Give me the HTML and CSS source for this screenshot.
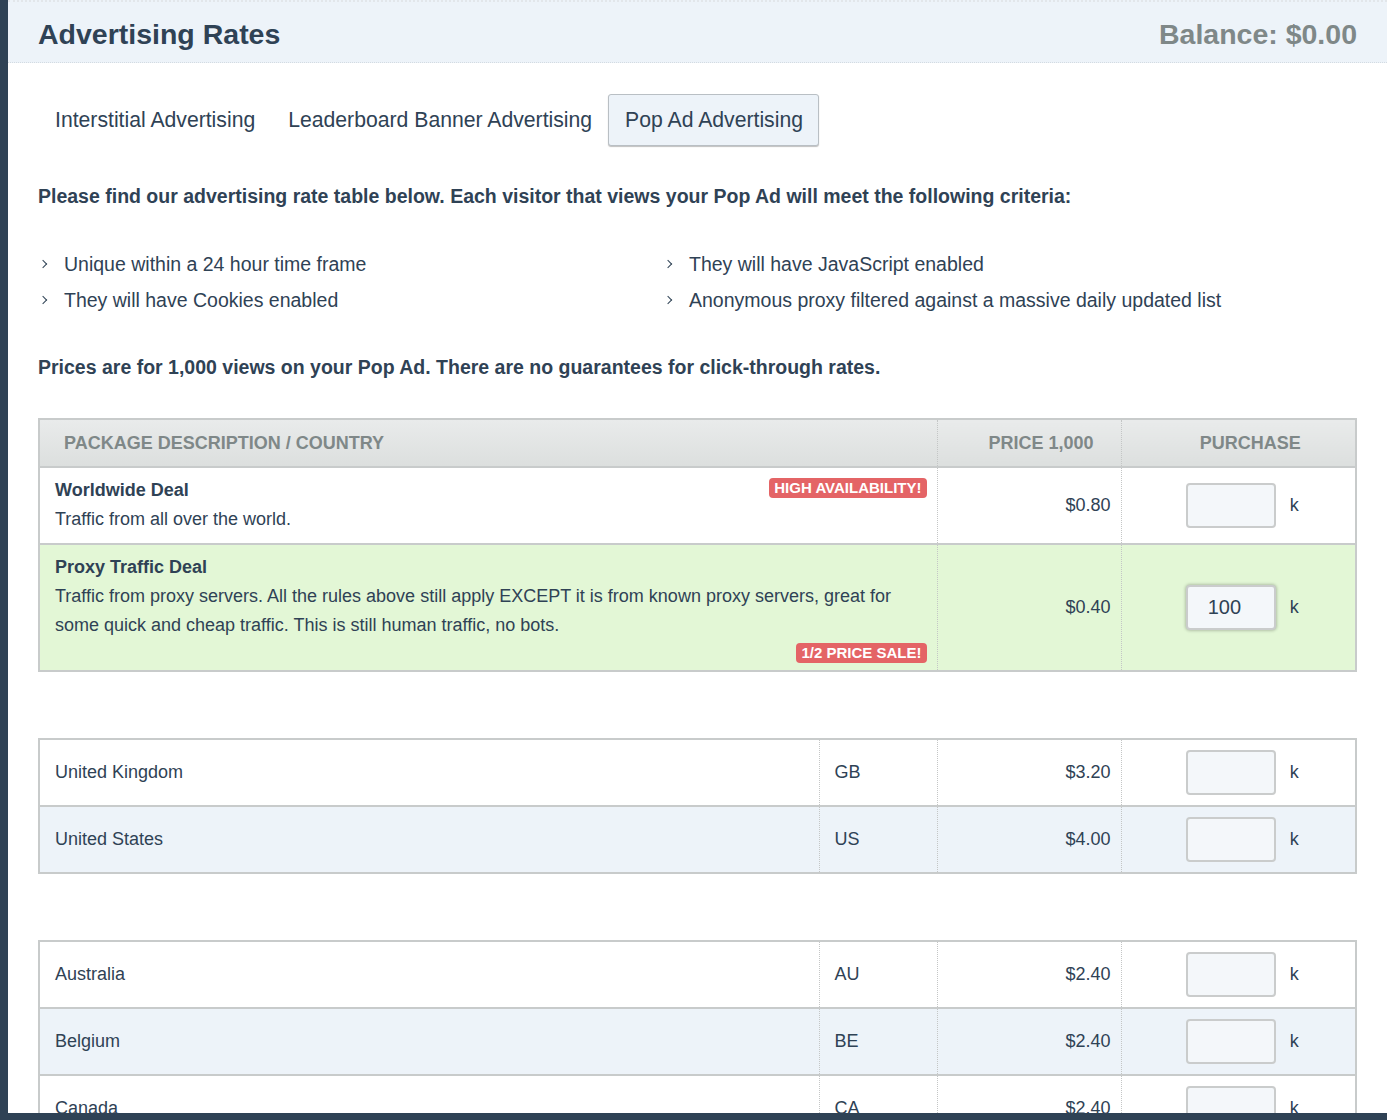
FILE: index.html
```html
<!DOCTYPE html>
<html lang="en">
<head>
<meta charset="utf-8">
<title>Advertising Rates</title>
<link rel="stylesheet" href="styles.css">
</head>
<body>
<div class="frame">
  <header class="page-header">
    <h1 class="title">Advertising Rates</h1>
    <div class="balance">Balance: $0.00</div>
  </header>
  <main class="content">
    <nav class="tabs">
      <a class="tab">Interstitial Advertising</a>
      <a class="tab">Leaderboard Banner Advertising</a>
      <a class="tab active">Pop Ad Advertising</a>
    </nav>

    <p class="lead">Please find our advertising rate table below. Each visitor that views your Pop Ad will meet the following criteria:</p>

    <ul class="criteria">
      <li>Unique within a 24 hour time frame</li>
      <li>They will have JavaScript enabled</li>
      <li>They will have Cookies enabled</li>
      <li>Anonymous proxy filtered against a massive daily updated list</li>
    </ul>

    <p class="lead lead-2">Prices are for 1,000 views on your Pop Ad. There are no guarantees for click-through rates.</p>

    <table class="rates rates-main">
      <colgroup><col class="c-desc-wide"><col class="c-price"><col class="c-buy"></colgroup>
      <thead>
        <tr><th class="th-left">Package Description / Country</th><th class="th-price">Price 1,000</th><th class="th-buy">Purchase</th></tr>
      </thead>
      <tbody>
        <tr class="deal">
          <td class="desc"><span class="badge badge-top">HIGH AVAILABILITY!</span><strong class="deal-name">Worldwide Deal</strong><div class="deal-text">Traffic from all over the world.</div></td>
          <td class="price">$0.80</td>
          <td class="buy"><span class="qty"><input class="qty-input" type="text"></span><span class="unit">k</span></td>
        </tr>
        <tr class="deal deal-green">
          <td class="desc"><strong class="deal-name">Proxy Traffic Deal</strong><div class="deal-text">Traffic from proxy servers. All the rules above still apply EXCEPT it is from known proxy servers, great for some quick and cheap traffic. This is still human traffic, no bots.</div><div class="badge-row"><span class="badge">1/2 PRICE SALE!</span></div></td>
          <td class="price">$0.40</td>
          <td class="buy"><span class="qty"><input class="qty-input focused" type="text" value="100"></span><span class="unit">k</span></td>
        </tr>
      </tbody>
    </table>

    <table class="rates rates-country">
      <colgroup><col class="c-country"><col class="c-code"><col class="c-price"><col class="c-buy"></colgroup>
      <tbody>
        <tr><td class="country">United Kingdom</td><td class="code">GB</td><td class="price">$3.20</td><td class="buy"><span class="qty"><input class="qty-input" type="text"></span><span class="unit">k</span></td></tr>
        <tr class="alt"><td class="country">United States</td><td class="code">US</td><td class="price">$4.00</td><td class="buy"><span class="qty"><input class="qty-input" type="text"></span><span class="unit">k</span></td></tr>
      </tbody>
    </table>

    <table class="rates rates-country">
      <colgroup><col class="c-country"><col class="c-code"><col class="c-price"><col class="c-buy"></colgroup>
      <tbody>
        <tr><td class="country">Australia</td><td class="code">AU</td><td class="price">$2.40</td><td class="buy"><span class="qty"><input class="qty-input" type="text"></span><span class="unit">k</span></td></tr>
        <tr class="alt"><td class="country">Belgium</td><td class="code">BE</td><td class="price">$2.40</td><td class="buy"><span class="qty"><input class="qty-input" type="text"></span><span class="unit">k</span></td></tr>
        <tr><td class="country">Canada</td><td class="code">CA</td><td class="price">$2.40</td><td class="buy"><span class="qty"><input class="qty-input" type="text"></span><span class="unit">k</span></td></tr>
      </tbody>
    </table>
  </main>
</div>
<div class="bottom-bar"></div>
</body>
</html>
```

FILE: styles.css
```css
html, body {
  margin: 0;
  padding: 0;
}
body {
  background: #ffffff;
  font-family: "Liberation Sans", Arial, Helvetica, sans-serif;
  color: #2c3e50;
  overflow: hidden;
}
.frame {
  border-left: 8px solid #2f4255;
  min-height: 1120px;
  box-sizing: border-box;
}
.page-header {
  background: #edf3f9;
  height: 63px;
  box-sizing: border-box;
  border-top: 2px dotted #e2e6ea;
  border-bottom: 1px dotted #d3dbe2;
  padding: 0 30px 0 30px;
  display: flex;
  align-items: center;
  justify-content: space-between;
}
.title {
  margin: 0;
  font-size: 28.5px;
  font-weight: bold;
  color: #2f4255;
  padding-top: 5px;
}
.balance {
  font-size: 28.5px;
  font-weight: bold;
  color: #7f8888;
  padding-top: 5px;
}
.content {
  padding: 31px 30px 0 30px;
}
.tabs {
  display: flex;
  height: 52px;
}
.tab {
  display: flex;
  align-items: center;
  padding: 0 16px 0 17px;
  font-size: 21.2px;
  color: #2f4255;
  border-radius: 3px;
}
.tab.active {
  background: #edf3f9;
  border: 1px solid #b9bfc4;
  box-shadow: 0 1px 1px rgba(0,0,0,0.25);
  padding: 0 15px 0 16px;
}
.lead {
  margin: 38px 0 0 0;
  font-size: 19.5px;
  font-weight: bold;
  line-height: 24px;
  color: #2f4255;
}
.lead-2 {
  margin-top: 43px;
}
.criteria {
  list-style: none;
  margin: 44px 0 0 0;
  padding: 0;
  display: grid;
  grid-template-columns: 625px 1fr;
  row-gap: 12px;
}
.criteria li {
  position: relative;
  padding-left: 26px;
  font-size: 19.5px;
  line-height: 24px;
  color: #2f4255;
}
.criteria li::before {
  content: "";
  position: absolute;
  left: 2px;
  top: 9px;
  width: 5px;
  height: 5px;
  border-top: 1.6px solid #2f4255;
  border-right: 1.6px solid #2f4255;
  transform: rotate(45deg);
}
.rates {
  width: 100%;
  border-collapse: collapse;
  table-layout: fixed;
  border: 2px solid #c8cbcb;
  font-size: 18px;
  color: #2f4255;
}
.rates-main {
  margin-top: 39px;
}
.rates-country {
  margin-top: 66px;
}
.c-desc-wide { width: 898px; }
.c-country { width: 780px; }
.c-code { width: 118px; }
.c-price { width: 184px; }
.c-buy { width: auto; }
.rates thead th {
  height: 46px;
  padding: 0;
  background: linear-gradient(#e9ebeb, #dcdfde);
  border-bottom: 2px solid #c8cbcb;
  font-size: 18px;
  font-weight: bold;
  text-transform: uppercase;
  color: #7f8888;
}
.th-left { text-align: left; padding-left: 24px !important; }
.th-price { text-align: right; padding-right: 27px !important; border-left: 1px dotted #c4c6c6; }
.th-buy { text-align: center; border-left: 1px dotted #c4c6c6; padding-left: 24px !important; }
.rates td {
  padding: 0;
  vertical-align: middle;
}
.rates td + td {
  border-left: 1px dotted #c4c6c6;
}
.rates tbody tr + tr td {
  border-top: 2px solid #c8cbcb;
}
.deal .desc {
  padding: 8px 10px 9px 15px;
  vertical-align: top;
  line-height: 29px;
}
.deal-green .desc {
  padding-bottom: 7px;
}
.deal-name {
  font-weight: bold;
  color: #2f4255;
}
.deal-text {
  line-height: 29px;
}
.deal-green td {
  background: #e3f7d6;
}
.badge {
  display: inline-block;
  background: #e46466;
  color: #ffffff;
  font-size: 15px;
  font-weight: bold;
  line-height: 20px;
  padding: 0 5px;
  border-radius: 4px;
}
.badge-top {
  float: right;
  margin-top: 2px;
}
.badge-row {
  text-align: right;
  line-height: 20px;
  margin-top: 2px;
}
.price {
  text-align: right;
  padding-right: 10px !important;
}
.buy {
  text-align: center;
  white-space: nowrap;
  padding-left: 8px !important;
}
.qty {
  display: inline-block;
  vertical-align: middle;
}
.qty-input {
  width: 90px;
  height: 45px;
  box-sizing: border-box;
  border: 2px solid #cacccc;
  border-radius: 4px;
  background: #f4f7fa;
  font-family: "Liberation Sans", Arial, sans-serif;
  font-size: 20px;
  color: #2f4255;
  padding: 0 0 0 20px;
  outline: none;
  display: block;
}
.qty-input.focused {
  box-shadow: 0 0 3px 1px rgba(0,0,0,0.22);
}
.unit {
  display: inline-block;
  vertical-align: middle;
  margin-left: 14px;
  font-size: 18px;
}
.rates-country td {
  height: 65px;
}
.country {
  padding-left: 15px !important;
}
.code {
  padding-left: 15px !important;
}
.rates-country tr.alt td {
  background: #edf3f9;
}
.bottom-bar {
  position: fixed;
  left: 0;
  right: 0;
  bottom: 0;
  height: 7px;
  background: #2f4255;
}
```
